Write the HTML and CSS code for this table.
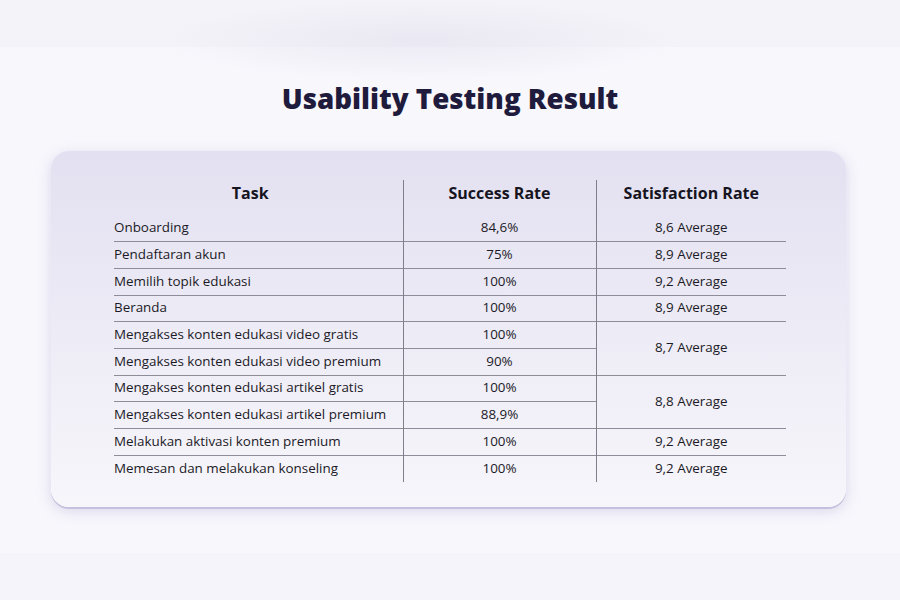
FILE: index.html
```html
<!DOCTYPE html>
<html lang="id">
<head>
<meta charset="utf-8">
<title>Usability Testing Result</title>
<link rel="stylesheet" href="styles.css">
</head>
<body>
<main class="page">
  <h1 class="title">Usability Testing Result</h1>
  <section class="card">
    <table class="results">
      <colgroup>
        <col class="col-task">
        <col class="col-success">
        <col class="col-sat">
      </colgroup>
      <thead>
        <tr>
          <th class="h-task">Task</th>
          <th>Success Rate</th>
          <th>Satisfaction Rate</th>
        </tr>
      </thead>
      <tbody>
        <tr class="first"><td class="task">Onboarding</td><td>84,6%</td><td>8,6 Average</td></tr>
        <tr><td class="task">Pendaftaran akun</td><td>75%</td><td>8,9 Average</td></tr>
        <tr><td class="task">Memilih topik edukasi</td><td>100%</td><td>9,2 Average</td></tr>
        <tr><td class="task">Beranda</td><td>100%</td><td>8,9 Average</td></tr>
        <tr><td class="task">Mengakses konten edukasi video gratis</td><td>100%</td><td rowspan="2" class="merged">8,7 Average</td></tr>
        <tr><td class="task">Mengakses konten edukasi video premium</td><td>90%</td></tr>
        <tr><td class="task">Mengakses konten edukasi artikel gratis</td><td>100%</td><td rowspan="2" class="merged">8,8 Average</td></tr>
        <tr><td class="task">Mengakses konten edukasi artikel premium</td><td>88,9%</td></tr>
        <tr><td class="task">Melakukan aktivasi konten premium</td><td>100%</td><td>9,2 Average</td></tr>
        <tr><td class="task">Memesan dan melakukan konseling</td><td>100%</td><td>9,2 Average</td></tr>
      </tbody>
    </table>
  </section>
</main>
</body>
</html>
```
FILE: styles.css
```css
html, body {
  margin: 0;
  padding: 0;
}

body {
  width: 900px;
  height: 600px;
  overflow: hidden;
  font-family: "Open Sans", "Liberation Sans", sans-serif;
  color: #1b1a26;
  background:
    radial-gradient(ellipse 260px 40px at 420px 40px, rgba(225, 222, 236, 0.55), rgba(225, 222, 236, 0) 100%),
    linear-gradient(to bottom,
      #f4f3f9 0px, #f4f3f9 47px,
      #f8f7fc 47px, #f8f7fc 553px,
      #f5f4fa 553px, #f5f4fa 600px);
}

.page {
  padding-top: 80px;
}

.title {
  margin: 0;
  height: 36px;
  line-height: 36px;
  text-align: center;
  font-family: "Open Sans", "Liberation Sans", sans-serif;
  font-weight: 800;
  font-size: 27.7px;
  color: #1f1b3c;
}

.card {
  box-sizing: border-box;
  margin: 35px 0 0 51px;
  width: 795px;
  height: 356px;
  padding: 29px 0 0 63px;
  border-radius: 18px;
  background: linear-gradient(to bottom, #e3e1f1 0%, #eceaf5 45%, #f7f6fb 100%);
  box-shadow:
    0 2px 0 rgba(160, 154, 200, 0.45),
    0 4px 14px rgba(140, 130, 190, 0.28);
}

.results {
  width: 672px;
  border-collapse: collapse;
  table-layout: fixed;
  font-size: 13.4px;
}

.col-task { width: 289px; }
.col-success { width: 193px; }
.col-sat { width: 190px; }

.results th {
  box-sizing: border-box;
  height: 35px;
  padding: 3px 0 0;
  vertical-align: top;
  line-height: 20px;
  font-size: 16px;
  font-weight: 700;
  color: #16151f;
  text-align: center;
}

.results th.h-task {
  padding-right: 16px;
}

.results th + th,
.results td + td {
  border-left: 1px solid #7f7e8b;
}

.results td {
  box-sizing: border-box;
  height: 26.7px;
  padding: 0 0 2px;
  vertical-align: middle;
  line-height: 18px;
  text-align: center;
  color: #1b1a26;
}

.results td.task {
  text-align: left;
}

.results tbody tr + tr td {
  border-top: 1px solid #8d8c99;
}

.results td.merged {
  border-left: 1px solid #7f7e8b;
}
```
